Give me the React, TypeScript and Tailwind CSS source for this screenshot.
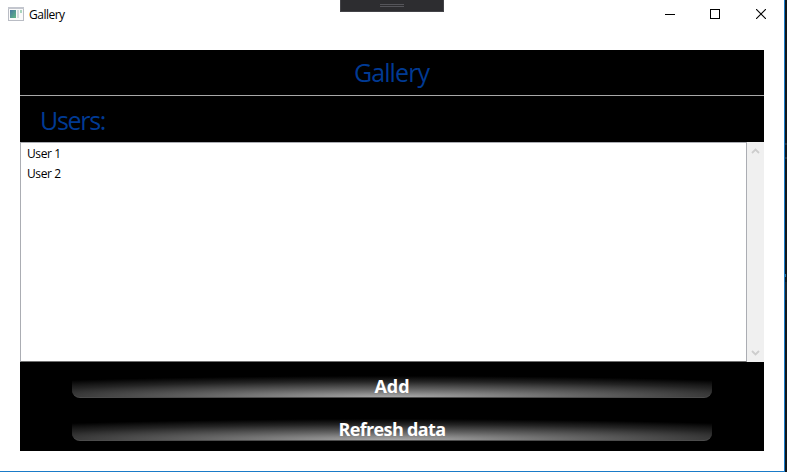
import React from 'react';

function TitleBar() {
  return (
    <header className="relative flex h-[50px] shrink-0 items-start">
      <svg className="ml-2 mt-[7px] shrink-0" width="16" height="14" shapeRendering="crispEdges">
        <rect x="0.5" y="0.5" width="15" height="13" fill="#fafafa" stroke="#b9bcc4" />
        <rect x="0" y="0" width="16" height="2" fill="#c3c6ce" />
        <defs>
          <linearGradient id="pane" x1="0" y1="0" x2="1" y2="1">
            <stop offset="0" stopColor="#4676a0" />
            <stop offset="1" stopColor="#62b784" />
          </linearGradient>
        </defs>
        <rect x="2" y="3" width="6" height="8" fill="url(#pane)" />
        <rect x="9" y="3" width="2" height="8" fill="#d3d8dc" />
        <rect x="12" y="3" width="2" height="3" fill="#a9d5bd" />
      </svg>
      <span className="ml-[5px] mt-[7px] text-[12px] leading-4 tracking-[-0.5px] text-black">Gallery</span>
      <div className="absolute left-[340px] top-0 flex h-3 w-[104px] flex-col items-center gap-px border border-t-0 border-[#444448] bg-[#2d2d30] pt-1">
        <i className="h-px w-6 bg-[#55555a]" />
        <i className="h-px w-6 bg-[#55555a]" />
      </div>
      <div className="ml-auto mr-[18px] mt-[9px] flex gap-[35px]">
        <svg width="10" height="10" shapeRendering="crispEdges"><path d="M0 5.5H10" stroke="#000" /></svg>
        <svg width="10" height="10" shapeRendering="crispEdges"><path d="M.5.5H9.5V9.5H.5Z" stroke="#000" fill="none" /></svg>
        <svg className="ml-px" width="10" height="10"><path d="M0 0L10 10M10 0L0 10" stroke="#000" strokeWidth="1.1" /></svg>
      </div>
    </header>
  );
}

function GlowButton({ label, tracking = '' }: { label: string; tracking?: string }) {
  return (
    <button className={`flex h-[25px] w-[640px] items-center justify-center rounded-b-lg border-b border-[#4c4c4c] bg-[radial-gradient(600px_24px_at_50%_100%,#aaa_0%,#646464_32%,#242424_64%,#000_88%)] pt-px text-[18px] font-bold leading-6 text-white ${tracking}`}>
      {label}
    </button>
  );
}

function ScrollBar() {
  return (
    <div className="flex w-[17px] flex-col items-center justify-between bg-[#f0f0f0] py-[6px]">
      <svg width="9" height="6"><path d="M1 5L4.5 1.5L8 5" stroke="#cdcdcd" strokeWidth="1.8" fill="none" /></svg>
      <svg width="9" height="6"><path d="M1 1L4.5 4.5L8 1" stroke="#cdcdcd" strokeWidth="1.8" fill="none" /></svg>
    </div>
  );
}

export default function App() {
  return (
    <div className="flex h-[472px] w-[787px] overflow-hidden bg-[#10171c] font-['Open_Sans','Noto_Sans',sans-serif]">
      <div className="flex w-[785px] shrink-0 flex-col border-b border-r border-[#1a7bc8] bg-white">
        <TitleBar />
        <main className="ml-5 flex h-[401px] w-[744px] flex-col bg-black">
          <h1 className="flex h-[46px] shrink-0 items-center justify-center border-b border-[#a8a8a8] pr-px pt-px text-[25px] tracking-[-0.9px] text-[#003a94]">Gallery</h1>
          <h2 className="flex h-[46px] shrink-0 items-center pl-5 pt-1 text-[25px] tracking-[-1.3px] text-[#003a94]">Users:</h2>
          <div className="flex h-[220px] shrink-0">
            <ul className="w-[727px] border border-[#abadb3] border-b-[#707070] bg-white pl-[6px] pt-px text-[12px] leading-5 tracking-[-0.4px] text-black">
              <li>User 1</li>
              <li>User 2</li>
            </ul>
            <ScrollBar />
          </div>
          <div className="flex flex-col items-center gap-[18px] pt-[11px]">
            <GlowButton label="Add" />
            <GlowButton label="Refresh data" tracking="tracking-[-0.65px]" />
          </div>
        </main>
      </div>
      <aside className="flex w-0.5 flex-col pt-[143px]">
        <i className="h-0.5 bg-[#28323a]" />
        <i className="mt-3 h-0.5 bg-[#28323a]" />
        <i className="mt-[115px] h-[3px] w-px bg-[#2a7399]" />
        <i className="mt-[5px] h-[18px] bg-[#1b252d]" />
      </aside>
    </div>
  );
}
